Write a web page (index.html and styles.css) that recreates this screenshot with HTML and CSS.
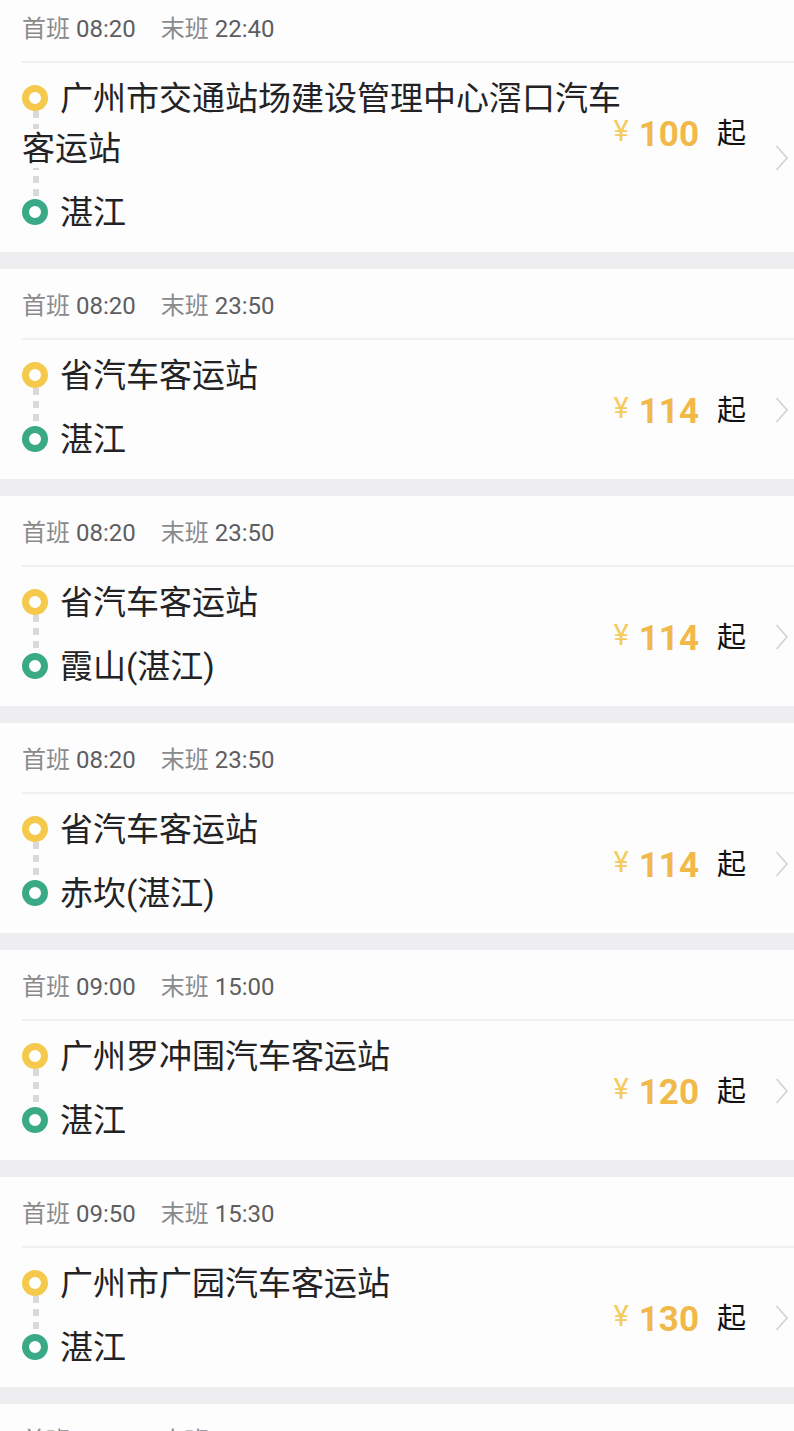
FILE: index.html
```html
<!DOCTYPE html>
<html lang="zh-CN">
<head>
<meta charset="utf-8">
<title>班次列表</title>
<link rel="stylesheet" href="styles.css">
</head>
<body>
<div class="list">

  <div class="card">
    <div class="head"><span class="t"><span class="cn">首班</span> <span class="num">08:20</span></span><span class="t"><span class="cn">末班</span> <span class="num">22:40</span></span></div>
    <div class="body">
      <div class="route">
        <div class="stop from"><i class="dot yellow"></i><span class="name">广州市交通站场建设管理中心滘口汽车客运站</span></div>
        <div class="stop to"><i class="dot green"></i><span class="name">湛江</span></div>
      </div>
      <div class="price"><span class="yen">¥</span><span class="amt">100</span><span class="qi">起</span></div>
      <svg class="chev" width="14" height="26" viewBox="0 0 14 26"><polyline points="1.5,1 12,13 1.5,25" fill="none" stroke="#d2d2d4" stroke-width="1.6"/></svg>
    </div>
  </div>

  <div class="card">
    <div class="head"><span class="t"><span class="cn">首班</span> <span class="num">08:20</span></span><span class="t"><span class="cn">末班</span> <span class="num">23:50</span></span></div>
    <div class="body">
      <div class="route">
        <div class="stop from"><i class="dot yellow"></i><span class="name">省汽车客运站</span></div>
        <div class="stop to"><i class="dot green"></i><span class="name">湛江</span></div>
      </div>
      <div class="price"><span class="yen">¥</span><span class="amt">114</span><span class="qi">起</span></div>
      <svg class="chev" width="14" height="26" viewBox="0 0 14 26"><polyline points="1.5,1 12,13 1.5,25" fill="none" stroke="#d2d2d4" stroke-width="1.6"/></svg>
    </div>
  </div>

  <div class="card">
    <div class="head"><span class="t"><span class="cn">首班</span> <span class="num">08:20</span></span><span class="t"><span class="cn">末班</span> <span class="num">23:50</span></span></div>
    <div class="body">
      <div class="route">
        <div class="stop from"><i class="dot yellow"></i><span class="name">省汽车客运站</span></div>
        <div class="stop to"><i class="dot green"></i><span class="name">霞山(湛江)</span></div>
      </div>
      <div class="price"><span class="yen">¥</span><span class="amt">114</span><span class="qi">起</span></div>
      <svg class="chev" width="14" height="26" viewBox="0 0 14 26"><polyline points="1.5,1 12,13 1.5,25" fill="none" stroke="#d2d2d4" stroke-width="1.6"/></svg>
    </div>
  </div>

  <div class="card">
    <div class="head"><span class="t"><span class="cn">首班</span> <span class="num">08:20</span></span><span class="t"><span class="cn">末班</span> <span class="num">23:50</span></span></div>
    <div class="body">
      <div class="route">
        <div class="stop from"><i class="dot yellow"></i><span class="name">省汽车客运站</span></div>
        <div class="stop to"><i class="dot green"></i><span class="name">赤坎(湛江)</span></div>
      </div>
      <div class="price"><span class="yen">¥</span><span class="amt">114</span><span class="qi">起</span></div>
      <svg class="chev" width="14" height="26" viewBox="0 0 14 26"><polyline points="1.5,1 12,13 1.5,25" fill="none" stroke="#d2d2d4" stroke-width="1.6"/></svg>
    </div>
  </div>

  <div class="card">
    <div class="head"><span class="t"><span class="cn">首班</span> <span class="num">09:00</span></span><span class="t"><span class="cn">末班</span> <span class="num">15:00</span></span></div>
    <div class="body">
      <div class="route">
        <div class="stop from"><i class="dot yellow"></i><span class="name">广州罗冲围汽车客运站</span></div>
        <div class="stop to"><i class="dot green"></i><span class="name">湛江</span></div>
      </div>
      <div class="price"><span class="yen">¥</span><span class="amt">120</span><span class="qi">起</span></div>
      <svg class="chev" width="14" height="26" viewBox="0 0 14 26"><polyline points="1.5,1 12,13 1.5,25" fill="none" stroke="#d2d2d4" stroke-width="1.6"/></svg>
    </div>
  </div>

  <div class="card">
    <div class="head"><span class="t"><span class="cn">首班</span> <span class="num">09:50</span></span><span class="t"><span class="cn">末班</span> <span class="num">15:30</span></span></div>
    <div class="body">
      <div class="route">
        <div class="stop from"><i class="dot yellow"></i><span class="name">广州市广园汽车客运站</span></div>
        <div class="stop to"><i class="dot green"></i><span class="name">湛江</span></div>
      </div>
      <div class="price"><span class="yen">¥</span><span class="amt">130</span><span class="qi">起</span></div>
      <svg class="chev" width="14" height="26" viewBox="0 0 14 26"><polyline points="1.5,1 12,13 1.5,25" fill="none" stroke="#d2d2d4" stroke-width="1.6"/></svg>
    </div>
  </div>

  <div class="card">
    <div class="head"><span class="t"><span class="cn">首班</span> <span class="num">06:30</span></span><span class="t"><span class="cn">末班</span> <span class="num">20:00</span></span></div>
    <div class="body">
      <div class="route">
        <div class="stop from"><i class="dot yellow"></i><span class="name">广州市天河客运站</span></div>
        <div class="stop to"><i class="dot green"></i><span class="name">湛江</span></div>
      </div>
      <div class="price"><span class="yen">¥</span><span class="amt">130</span><span class="qi">起</span></div>
      <svg class="chev" width="14" height="26" viewBox="0 0 14 26"><polyline points="1.5,1 12,13 1.5,25" fill="none" stroke="#d2d2d4" stroke-width="1.6"/></svg>
    </div>
  </div>

</div>
</body>
</html>
```

FILE: styles.css
```css
html, body {
  margin: 0;
  padding: 0;
  background: #eeeef0;
  overflow: hidden;
}

body {
  font-family: Roboto, "Noto Sans CJK SC", sans-serif;
}

.list {
  margin-top: -8px;
  display: flex;
  flex-direction: column;
  gap: 17px;
}

.card {
  background: #fdfdfe;
}

.head {
  margin-left: 22px;
  height: 71px;
  box-sizing: border-box;
  padding-top: 3px;
  border-bottom: 2px solid #f0f0f2;
  display: flex;
  align-items: center;
  font-size: 24px;
  line-height: 30px;
}

.head .t {
  margin-right: 25px;
  white-space: nowrap;
}

.head .cn {
  color: #8a8a8c;
  font-family: "Noto Sans CJK SC", sans-serif;
}

.head .num {
  color: #5e5e60;
}

.body {
  display: grid;
  grid-template-columns: 1fr;
}

.body > * {
  grid-area: 1 / 1;
}

.route {
  position: relative;
  justify-self: start;
  width: 612px;
  padding: 11px 0 14px 22px;
  font-size: 33px;
  line-height: 50px;
  color: #232325;
}

.route::before {
  content: "";
  position: absolute;
  left: 33px;
  width: 6px;
  top: 48px;
  bottom: 51px;
  background: repeating-linear-gradient(to bottom, #d9d9db 0 7px, transparent 7px 13px);
}

.stop {
  position: relative;
  z-index: 1;
}

.stop.to {
  margin-top: 14px;
}

.name {
  background: #fdfdfe;
}

.dot {
  display: inline-block;
  width: 26px;
  height: 26px;
  box-sizing: border-box;
  border-radius: 50%;
  border: 7px solid;
  background: #fff;
  margin: 0 12px 0 0;
  vertical-align: -1px;
}

.dot.yellow {
  border-color: #f5c94b;
}

.dot.green {
  border-color: #3aaa86;
}

.price {
  justify-self: end;
  align-self: start;
  margin-top: 48px;
  margin-right: 48px;
  line-height: 40px;
  white-space: nowrap;
  z-index: 2;
}

.yen {
  font-size: 29px;
  color: #f5cb5c;
  vertical-align: 5px;
  margin-right: 10px;
}

.amt {
  font-size: 35px;
  font-weight: 700;
  color: #f1b94a;
}

.qi {
  font-family: "Noto Sans CJK SC", sans-serif;
  font-size: 29px;
  color: #121212;
  margin-left: 18px;
  vertical-align: 2px;
}

.chev {
  justify-self: end;
  align-self: center;
  margin-right: 5px;
  display: block;
}
```
